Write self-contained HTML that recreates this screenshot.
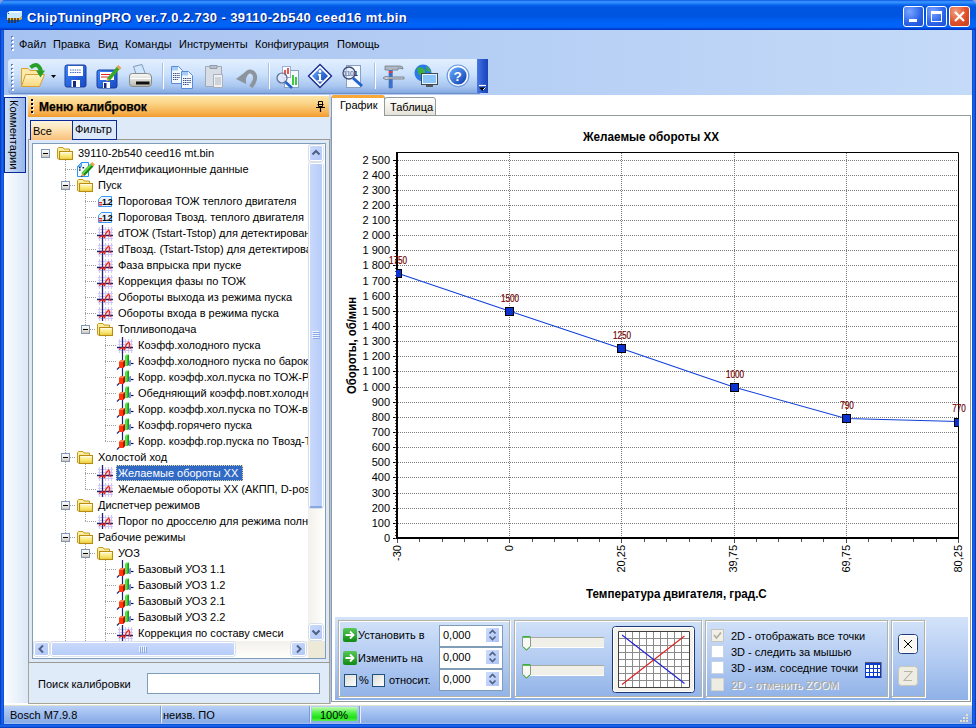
<!DOCTYPE html>
<html><head><meta charset="utf-8">
<style>
*{box-sizing:border-box;margin:0;padding:0}
html,body{width:976px;height:728px;overflow:hidden;background:#fff}
body{position:relative;font-family:"Liberation Sans",sans-serif;font-size:11px;color:#000}
.a{position:absolute}
.t{position:absolute;white-space:nowrap;line-height:13px}
svg{position:absolute;overflow:visible}
/* title bar */
#title{left:0;top:0;width:976px;height:30px;background:linear-gradient(#0a4ee0 0px,#2a80f8 1px,#3a98ff 2px,#2a88fa 3px,#0a64ec 5px,#0056e2 7px,#0055e0 16px,#0060f4 21px,#0064f8 26px,#0058f0 28px,#0038c8 29px,#0038c8 30px);border-radius:5px 5px 0 0}
#ttext{left:27px;top:10px;color:#fff;font-weight:bold;font-size:13px;letter-spacing:.4px;line-height:16px;text-shadow:1px 1px 0 #0a1e80}
.wb{position:absolute;top:6px;width:21px;height:21px;border:1px solid #fff;border-radius:3px;background:radial-gradient(circle at 30% 25%,#7aa6ff,#2a62e8 60%,#1f4fd0)}
/* borders */
#bl{left:0;top:30px;width:4px;height:698px;background:linear-gradient(90deg,#0030b8,#1a6bf0 50%,#0848d8)}
#br{left:972px;top:30px;width:4px;height:698px;background:linear-gradient(90deg,#0848d8,#1a6bf0 50%,#0030b8)}
#bb{left:0;top:724px;width:976px;height:4px;background:linear-gradient(#0848d8,#1a6bf0 50%,#0030b8)}
/* menu + toolbar band */
#band{left:4px;top:30px;width:968px;height:65px;background:linear-gradient(90deg,#a6c2f0,#c4daf8)}
.menu{top:38px}
#tb{left:8px;top:59px;width:472px;height:34px;border-radius:4px 0 0 4px;background:linear-gradient(#e3efff,#cbe1fc 45%,#a9c6f0 80%,#84a9e2);box-shadow:0 1px 0 #6f8fc4}
#chev{left:477px;top:59px;width:11px;height:34px;background:linear-gradient(90deg,#4a78e0,#2a58d0 50%,#1a44b8)}
.grip{position:absolute;width:2px;height:2px;background:#5d7fb8;box-shadow:1px 1px 0 #fff}
.sep{position:absolute;width:1px;background:#6a8cc6;box-shadow:1px 0 0 #fff}
/* left area */
#lside{left:4px;top:95px;width:24px;height:608px;background:linear-gradient(90deg,#fbfdff,#dce8f7)}
#ctab{left:4px;top:97px;width:22px;height:76px;border:1px solid #0a2a9a;background:linear-gradient(90deg,#d0e2f9,#98b6e8)}
#lpanel{left:28px;top:139px;width:302px;height:565px;background:#e0ebf9;border:1px solid #a8a698;border-top:none}
#lpbg{left:28px;top:117px;width:302px;height:22px;background:#dfeaf8}
#lhead{left:28px;top:96px;width:301px;height:21px;background:linear-gradient(#fde6a8,#fbd487 35%,#f7b04e 80%,#f19a2a)}
#tabAll{left:30px;top:120px;width:43px;height:20px;border:1px solid #0a2a9a;border-bottom:none;background:linear-gradient(#fff4e0,#fde5b8 40%,#f9c07a)}
#tabFlt{left:72px;top:120px;width:45px;height:20px;border:1px solid #0a2a9a;background:#dde9f8}
#page{left:28px;top:139px;width:302px;height:524px;border:1px solid #9c9a8e;background:#dde9f8}
#tree{left:32px;top:143px;width:294px;height:516px;border:1px solid #7f9db9;background:#fff;overflow:hidden}
#search{left:147px;top:673px;width:173px;height:21px;border:1px solid #7f9db9;background:#fff}
/* status */
#status{left:4px;top:705px;width:968px;height:19px;background:linear-gradient(#b8d0f6,#a0bef0 45%,#88ace6 90%,#a8c2ee);border-top:1px solid #e4e0d0}
/* right area */
#rpanel{left:331px;top:115px;width:640px;height:587px;border:1px solid #919b9c;border-top:1px solid #919b9c;background:#fff}
#tabG{left:331px;top:95px;width:54px;height:21px;border:1px solid #919b9c;border-bottom:none;border-top:3px solid #f8a838;border-radius:3px 3px 0 0;background:#fff}
#tabT{left:384px;top:97px;width:52px;height:19px;border:1px solid #919b9c;border-radius:3px 3px 0 0;background:linear-gradient(#fefefd,#f1efe6 60%,#e4e2d8)}
#bpanel{left:335px;top:617px;width:634px;height:84px;background:linear-gradient(#d3e3f9,#b4ccf2 50%,#8fb1e7);border-right:1px solid #fff;border-bottom:1px solid #fff}
.grp{position:absolute;top:620px;height:77px;border:1px solid #b6b3a4;box-shadow:inset 1px 1px 0 #fff,1px 1px 0 #fff}
</style></head><body>
<svg width="0" height="0" style="position:absolute;left:0;top:0">
<defs>
<linearGradient id="gMinus" x1="0" y1="0" x2="0" y2="1"><stop offset="0" stop-color="#fff"/><stop offset=".6" stop-color="#e6e4dc"/><stop offset="1" stop-color="#c8c2ac"/></linearGradient>
<linearGradient id="gFold" x1="0" y1="0" x2="0" y2="1"><stop offset="0" stop-color="#fffad0"/><stop offset=".55" stop-color="#f8e878"/><stop offset="1" stop-color="#eccc40"/></linearGradient>
<symbol id="minus" viewBox="0 0 9 9"><rect x=".5" y=".5" width="8" height="8" fill="url(#gMinus)" stroke="#8096b8"/><path d="M2 4.5H7" stroke="#000"/></symbol>
<symbol id="folder" viewBox="0 0 16 16"><path d="M0.5 12.5V2.5L1.5 1.5H6L7 3H12.5V5.5" fill="#faeea0" stroke="#c49a18"/><path d="M0.5 12.5L2.5 13.5" stroke="#c49a18"/><rect x="2.5" y="5.5" width="13" height="8" fill="url(#gFold)" stroke="#b88c10" stroke-width="1.1"/><path d="M3.5 6.6H14.5" stroke="#fffce8" stroke-width="1"/></symbol>
<symbol id="icE" viewBox="0 0 16 16" overflow="visible"><path d="M0.5 5.5L4.5 1.5H11.5V15.5H0.5Z" fill="#f4faff" stroke="#2a94f4"/><path d="M0.5 5.5L4.5 1.5V5.5Z" fill="#8cc0f4" stroke="#2a94f4" stroke-width=".8"/><rect x="2" y="6" width="1.6" height="1.4" fill="#102040"/><rect x="2" y="8.3" width="1.6" height="1.4" fill="#102040"/><rect x="5.5" y="6" width="1.6" height="1.4" fill="#102040"/><path d="M6 13.5L15 4" stroke="#188a10" stroke-width="4"/><path d="M5.6 12.6L14.3 3.4" stroke="#6ad84a" stroke-width="2"/><path d="M14.3 1.8L17 4.5" stroke="#f0a050" stroke-width="2.6"/><path d="M4 16L5 12.5L7.6 14.6Z" fill="#f0a858"/><path d="M4 16L4.6 14.4L5.8 15.3Z" fill="#000"/></symbol>
<symbol id="icN" viewBox="0 0 16 16"><path d="M1.5 6.5L4.5 3.5H14.5V13.5H1.5Z" fill="#eaf4ff" stroke="#3a98f8"/><rect x="2" y="9" width="3" height="1.3" fill="#f01818"/><rect x="2" y="11.2" width="3" height="1.3" fill="#f01818"/><text x="5" y="12.4" font-family="Liberation Sans" font-weight="bold" font-size="8.6" fill="#000" letter-spacing="-.7">1.2</text></symbol>
<symbol id="icC" viewBox="0 0 16 16"><g stroke="#cfc8f8" stroke-width="1.1"><path d="M2.5 2V16M8.5 2V16M11.5 2V16M14.5 2V16M1 4.5H16M1 7.5H16M1 13.5H16"/></g><path d="M5.5 0V17M0 10.5H16" stroke="#1e2070" stroke-width="1.3"/><path d="M2 12.5L5.5 10.5L7.5 12.5L8.6 9.4L9.4 7.4L11.6 5.2L12.6 6.4L12.6 10.4L13.6 11.8" fill="none" stroke="#f02818" stroke-width="1.3"/></symbol>
<symbol id="icB" viewBox="0 0 16 16" overflow="visible"><path d="M5.5 -1V8" stroke="#1e2070" stroke-width="1.2"/><path d="M14 10.5H16.5" stroke="#101040" stroke-width="1.2"/><path d="M0 16.5L2.5 14" stroke="#1e3070" stroke-width="1.2"/><path d="M2 9L4 7H8V13L6 15H2Z" fill="#ff3a08"/><path d="M6 9L8 7V13L6 15Z" fill="#c00808"/><path d="M2 9L4 7H8L6 9Z" fill="#ff8050"/><path d="M8 3L9.5 1.5H12V12L10.5 13H8Z" fill="#58e048"/><path d="M10.5 3L12 1.5V12L10.5 13Z" fill="#10a010"/><path d="M12 8L13 7H14V12.5L13 13H12Z" fill="#8a88f0"/></symbol>
</defs></svg>
<div class="a cornerbg" style="left:0;top:0;width:976px;height:8px;background:#8c9ed8"></div>
<div id="title" class="a"></div>
<svg style="left:6px;top:10px" width="17" height="14"><path d="M1 3L4 1H16V6L14 8H1Z" fill="#c8e8ff"/><path d="M4 1H16L14 3H1Z" fill="#e8f8ff"/><path d="M1 8H14L16 6V9L14 10H1Z" fill="#f0b830"/><path d="M3 8V13M6 8V13M9 8V13M12 8V12" stroke="#3a2a10" stroke-width="1.4"/><path d="M2 4L3 3" stroke="#304080"/></svg>
<div id="ttext" class="t">ChipTuningPRO ver.7.0.2.730 - 39110-2b540 ceed16 mt.bin</div>
<div class="wb" style="left:903px"><div class="a" style="left:5px;top:12px;width:8px;height:3px;background:#fff"></div></div>
<div class="wb" style="left:926px"><div class="a" style="left:4px;top:4px;width:11px;height:11px;border:1px solid #fff;border-top:3px solid #fff"></div></div>
<div class="wb" style="left:949px;background:radial-gradient(circle at 30% 25%,#f0a080,#e0502a 55%,#c8401c)"><svg style="left:0;top:0" width="19" height="19"><path d="M5 5L14 14M14 5L5 14" stroke="#fff" stroke-width="2.2"/></svg></div>
<div id="bl" class="a"></div><div id="br" class="a"></div><div id="bb" class="a"></div>
<div id="band" class="a"></div>
<div class="t menu" style="left:19px">Файл</div>
<div class="t menu" style="left:53px">Правка</div>
<div class="t menu" style="left:98px">Вид</div>
<div class="t menu" style="left:125px">Команды</div>
<div class="t menu" style="left:179px">Инструменты</div>
<div class="t menu" style="left:255px">Конфигурация</div>
<div class="t menu" style="left:337px">Помощь</div>
<div id="tb" class="a"></div>
<div id="chev" class="a"></div>
<div id="lside" class="a"></div>
<div id="ctab" class="a"></div>
<div class="t" style="left:8px;top:172px;transform:rotate(90deg);transform-origin:0 0;left:20px;top:100px">Комментарии</div>
<div id="lpbg" class="a"></div><div id="lpanel" class="a"></div>
<div id="lhead" class="a"></div>
<div class="t" style="left:39px;top:100px;font-weight:bold;font-size:12px;line-height:14px;-webkit-text-stroke:.25px #000">Меню калибровок</div>
<svg style="left:31px;top:99px" width="4" height="16"><g fill="#fff"><rect x="1" y="1" width="2" height="2"/><rect x="1" y="5" width="2" height="2"/><rect x="1" y="9" width="2" height="2"/><rect x="1" y="13" width="2" height="2"/></g><g fill="#000"><rect x="0" y="0" width="2" height="2"/><rect x="0" y="4" width="2" height="2"/><rect x="0" y="8" width="2" height="2"/><rect x="0" y="12" width="2" height="2"/></g></svg>
<svg style="left:315px;top:100px" width="10" height="12"><path d="M3.5 1.5H7.5V6.5H3.5Z M2.5 4.5H8.5" fill="none" stroke="#000"/><path d="M1 7.5H10M5.5 7.5V12" stroke="#000" stroke-width="1.2"/></svg>
<div id="page" class="a"></div>
<div id="tabAll" class="a"></div>
<div id="tabFlt" class="a"></div>
<div class="t" style="left:33px;top:125px">Все</div>
<div class="t" style="left:75px;top:123px">Фильтр</div>
<div id="tree" class="a"></div>
<div class="a" style="left:33px;top:144px;width:292px;height:514px;overflow:hidden"><div class="a" style="left:-33px;top:-144px;width:976px;height:728px"><svg style="left:0;top:0" width="976" height="728"><g stroke="#a0a0a0" stroke-dasharray="1 1" fill="none"><path d="M65.5 160V700"/><path d="M85.5 192V329"/><path d="M105.5 336V441"/><path d="M85.5 464V489"/><path d="M85.5 512V521"/><path d="M85.5 544V700"/><path d="M105.5 560V700"/><path d="M65 169.5H76"/><path d="M70 185.5H76"/><path d="M85 201.5H96"/><path d="M85 217.5H96"/><path d="M85 233.5H96"/><path d="M85 249.5H96"/><path d="M85 265.5H96"/><path d="M85 281.5H96"/><path d="M85 297.5H96"/><path d="M85 313.5H96"/><path d="M90 329.5H96"/><path d="M105 345.5H116"/><path d="M105 361.5H116"/><path d="M105 377.5H116"/><path d="M105 393.5H116"/><path d="M105 409.5H116"/><path d="M105 425.5H116"/><path d="M105 441.5H116"/><path d="M70 457.5H76"/><path d="M85 473.5H96"/><path d="M85 489.5H96"/><path d="M70 505.5H76"/><path d="M85 521.5H96"/><path d="M70 537.5H76"/><path d="M90 553.5H96"/><path d="M105 569.5H116"/><path d="M105 585.5H116"/><path d="M105 601.5H116"/><path d="M105 617.5H116"/><path d="M105 633.5H116"/></g></svg><svg style="left:41px;top:149px" width="9" height="9"><use href="#minus"/></svg><svg style="left:57px;top:146px" width="16" height="16"><use href="#folder"/></svg><div class="t" style="left:78px;top:147px">39110-2b540 ceed16 mt.bin</div><svg style="left:77px;top:161px" width="16" height="16"><use href="#icE"/></svg><div class="t" style="left:98px;top:163px">Идентификационные данные</div><svg style="left:61px;top:181px" width="9" height="9"><use href="#minus"/></svg><svg style="left:77px;top:178px" width="16" height="16"><use href="#folder"/></svg><div class="t" style="left:98px;top:179px">Пуск</div><svg style="left:97px;top:193px" width="16" height="16"><use href="#icN"/></svg><div class="t" style="left:118px;top:195px">Пороговая ТОЖ теплого двигателя</div><svg style="left:97px;top:209px" width="16" height="16"><use href="#icN"/></svg><div class="t" style="left:118px;top:211px">Пороговая Твозд. теплого двигателя</div><svg style="left:97px;top:225px" width="16" height="16"><use href="#icC"/></svg><div class="t" style="left:118px;top:227px">dТОЖ (Tstart-Tstop) для детектирования</div><svg style="left:97px;top:241px" width="16" height="16"><use href="#icC"/></svg><div class="t" style="left:118px;top:243px">dТвозд. (Tstart-Tstop) для детектирования</div><svg style="left:97px;top:257px" width="16" height="16"><use href="#icC"/></svg><div class="t" style="left:118px;top:259px">Фаза впрыска при пуске</div><svg style="left:97px;top:273px" width="16" height="16"><use href="#icC"/></svg><div class="t" style="left:118px;top:275px">Коррекция фазы по ТОЖ</div><svg style="left:97px;top:289px" width="16" height="16"><use href="#icC"/></svg><div class="t" style="left:118px;top:291px">Обороты выхода из режима пуска</div><svg style="left:97px;top:305px" width="16" height="16"><use href="#icC"/></svg><div class="t" style="left:118px;top:307px">Обороты входа в режима пуска</div><svg style="left:81px;top:325px" width="9" height="9"><use href="#minus"/></svg><svg style="left:97px;top:322px" width="16" height="16"><use href="#folder"/></svg><div class="t" style="left:118px;top:323px">Топливоподача</div><svg style="left:117px;top:337px" width="16" height="16"><use href="#icC"/></svg><div class="t" style="left:138px;top:339px">Коэфф.холодного пуска</div><svg style="left:117px;top:353px" width="16" height="16"><use href="#icB"/></svg><div class="t" style="left:138px;top:355px">Коэфф.холодного пуска по барокоррекции</div><svg style="left:117px;top:369px" width="16" height="16"><use href="#icB"/></svg><div class="t" style="left:138px;top:371px">Корр. коэфф.хол.пуска по ТОЖ-Pамб</div><svg style="left:117px;top:385px" width="16" height="16"><use href="#icB"/></svg><div class="t" style="left:138px;top:387px">Обедняющий коэфф.повт.холодного пуска</div><svg style="left:117px;top:401px" width="16" height="16"><use href="#icB"/></svg><div class="t" style="left:138px;top:403px">Корр. коэфф.хол.пуска по ТОЖ-вр</div><svg style="left:117px;top:417px" width="16" height="16"><use href="#icB"/></svg><div class="t" style="left:138px;top:419px">Коэфф.горячего пуска</div><svg style="left:117px;top:433px" width="16" height="16"><use href="#icB"/></svg><div class="t" style="left:138px;top:435px">Корр. коэфф.гор.пуска по Твозд-ТОЖ</div><svg style="left:61px;top:453px" width="9" height="9"><use href="#minus"/></svg><svg style="left:77px;top:450px" width="16" height="16"><use href="#folder"/></svg><div class="t" style="left:98px;top:451px">Холостой ход</div><svg style="left:97px;top:465px" width="16" height="16"><use href="#icC"/></svg><div class="a" style="left:116px;top:465px;width:127px;height:16px;background:#316ac5;outline:1px dotted #e8d890;outline-offset:-1px"></div><div class="t" style="left:118px;top:467px;color:#fff">Желаемые обороты XX</div><svg style="left:97px;top:481px" width="16" height="16"><use href="#icC"/></svg><div class="t" style="left:118px;top:483px">Желаемые обороты XX (АКПП, D-position)</div><svg style="left:61px;top:501px" width="9" height="9"><use href="#minus"/></svg><svg style="left:77px;top:498px" width="16" height="16"><use href="#folder"/></svg><div class="t" style="left:98px;top:499px">Диспетчер режимов</div><svg style="left:97px;top:513px" width="16" height="16"><use href="#icC"/></svg><div class="t" style="left:118px;top:515px">Порог по дросселю для режима полной нагрузки</div><svg style="left:61px;top:533px" width="9" height="9"><use href="#minus"/></svg><svg style="left:77px;top:530px" width="16" height="16"><use href="#folder"/></svg><div class="t" style="left:98px;top:531px">Рабочие режимы</div><svg style="left:81px;top:549px" width="9" height="9"><use href="#minus"/></svg><svg style="left:97px;top:546px" width="16" height="16"><use href="#folder"/></svg><div class="t" style="left:118px;top:547px">УОЗ</div><svg style="left:117px;top:561px" width="16" height="16"><use href="#icB"/></svg><div class="t" style="left:138px;top:563px">Базовый УОЗ 1.1</div><svg style="left:117px;top:577px" width="16" height="16"><use href="#icB"/></svg><div class="t" style="left:138px;top:579px">Базовый УОЗ 1.2</div><svg style="left:117px;top:593px" width="16" height="16"><use href="#icB"/></svg><div class="t" style="left:138px;top:595px">Базовый УОЗ 2.1</div><svg style="left:117px;top:609px" width="16" height="16"><use href="#icB"/></svg><div class="t" style="left:138px;top:611px">Базовый УОЗ 2.2</div><svg style="left:117px;top:625px" width="16" height="16"><use href="#icC"/></svg><div class="t" style="left:138px;top:627px">Коррекция по составу смеси</div></div></div>
<div class="t" style="left:38px;top:678px">Поиск калибровки</div>
<div id="search" class="a"></div>
<div id="status" class="a"></div>
<div class="t" style="left:10px;top:709px">Bosch M7.9.8</div>
<div class="t" style="left:163px;top:709px">неизв. ПО</div>
<div class="a" style="left:312px;top:707px;width:45px;height:14px;background:linear-gradient(#c0fab0,#48f040 45%,#20e018 75%,#58f050)"></div>
<div class="t" style="left:320px;top:709px">100%</div>
<div class="a" style="left:330px;top:117px;width:1px;height:587px;background:#aac2ee"></div>
<div class="a" style="left:329px;top:95px;width:2px;height:22px;background:#c8dcf4"></div>
<div id="rpanel" class="a"></div>
<div id="tabT" class="a"></div>
<div id="tabG" class="a"></div>
<div class="t" style="left:340px;top:99px">График</div>
<div class="t" style="left:390px;top:101px">Таблица</div>
<div id="bpanel" class="a"></div>
<div class="grp" style="left:338px;width:172px"></div>
<div class="grp" style="left:514px;width:188px"></div>
<div class="grp" style="left:705px;width:183px"></div>
<div class="grp" style="left:891px;width:34px"></div>
<svg style="left:0;top:0" width="976" height="100">
<defs>
<linearGradient id="tF" x1="0" y1="0" x2="0" y2="1"><stop offset="0" stop-color="#fff4c0"/><stop offset="1" stop-color="#f8d880"/></linearGradient>
<linearGradient id="tD" x1="0" y1="0" x2="1" y2="1"><stop offset="0" stop-color="#3a88ff"/><stop offset="1" stop-color="#1848c0"/></linearGradient>
<linearGradient id="tP" x1="0" y1="0" x2="0" y2="1"><stop offset="0" stop-color="#fafafa"/><stop offset="1" stop-color="#b8b8b0"/></linearGradient>
<linearGradient id="tH" x1="0" y1="0" x2="1" y2="1"><stop offset="0" stop-color="#6ab0ff"/><stop offset="1" stop-color="#0a3ab0"/></linearGradient>
</defs>
<!-- grip -->
<g fill="#6080b8"><rect x="11" y="64" width="2" height="2"/><rect x="11" y="68" width="2" height="2"/><rect x="11" y="72" width="2" height="2"/><rect x="11" y="76" width="2" height="2"/><rect x="11" y="80" width="2" height="2"/><rect x="11" y="84" width="2" height="2"/><rect x="11" y="88" width="2" height="2"/></g>
<g fill="#fff"><rect x="12" y="65" width="2" height="2"/><rect x="12" y="69" width="2" height="2"/><rect x="12" y="73" width="2" height="2"/><rect x="12" y="77" width="2" height="2"/><rect x="12" y="81" width="2" height="2"/><rect x="12" y="85" width="2" height="2"/><rect x="12" y="89" width="2" height="2"/></g>
<g fill="#6080b8"><rect x="11" y="36" width="2" height="2"/><rect x="11" y="40" width="2" height="2"/><rect x="11" y="44" width="2" height="2"/><rect x="11" y="48" width="2" height="2"/></g>
<g fill="#fff"><rect x="12" y="37" width="2" height="2"/><rect x="12" y="41" width="2" height="2"/><rect x="12" y="45" width="2" height="2"/><rect x="12" y="49" width="2" height="2"/></g>
<!-- open folder -->
<path d="M21.5 68.5H28L30 70.5H38.5V86.5H21.5Z" fill="#fde9a8" stroke="#d8a030"/>
<path d="M21.5 86.5L25.5 74.5H44.5L39.5 86.5Z" fill="url(#tF)" stroke="#d8a030"/>
<path d="M30.5 67.5Q38 61 41 71" fill="none" stroke="#28a028" stroke-width="4"/>
<path d="M36 70.5H45L40.5 77.5Z" fill="#28a028"/>
<path d="M51 75H56L53.5 78Z" fill="#000"/>
<!-- save -->
<rect x="65" y="65" width="21" height="22" rx="2" fill="url(#tD)" stroke="#1a3a9a"/>
<rect x="68" y="66" width="15" height="10" fill="#fff"/>
<path d="M70 70H81M70 72.5H81" stroke="#4070c8" stroke-dasharray="1.5 .8"/>
<rect x="71.5" y="80" width="8.5" height="7" fill="#fff"/><rect x="73" y="81" width="3" height="6" fill="#1a2a7a"/>
<!-- save as -->
<rect x="97" y="70" width="20" height="18" rx="2" fill="url(#tD)" stroke="#1a3a9a"/>
<rect x="100" y="72" width="14" height="8" fill="#fff"/>
<path d="M101 74.5H110M101 77H110" stroke="#e02020"/>
<rect x="103" y="82" width="7" height="6" fill="#fff"/><rect x="104" y="83" width="2.5" height="5" fill="#1a2a7a"/>
<path d="M108 80L119 67" stroke="#38a828" stroke-width="3.5"/><path d="M117.5 66L120.5 69" stroke="#f0a050" stroke-width="2.5"/><path d="M106 81.5L107.5 78L109.5 80Z" fill="#e8a060"/>
<!-- printer -->
<path d="M133.5 66.5L142 64.5L145.5 74.5L137 76.5Z" fill="#cfe6ff" stroke="#7890b0" stroke-width=".9"/>
<path d="M129.5 76Q129.5 73.5 132.5 73.5H147.5Q151.5 73.5 151.5 77V83.5Q151.5 86.5 148 86.5H133Q129.5 86.5 129.5 83.5Z" fill="url(#tP)" stroke="#8a8a84"/>
<path d="M130 78.5H151" stroke="#fff" stroke-width="1"/>
<path d="M136 81.5H149.5V84.5H136Z" fill="#101010"/>
<!-- separators -->
<path d="M162.5 63V89M268.5 63V89M374.5 63V89" stroke="#a8c0e8"/>
<path d="M163.5 63V89M269.5 63V89M375.5 63V89" stroke="#fffef8"/>
<!-- copy -->
<path d="M171.5 66.5H178.5L182.5 70.5V83.5H171.5Z" fill="#f4f9ff" stroke="#5a8ad8"/>
<path d="M172 67H178V70.5H172Z" fill="#a8ccf8"/>
<path d="M181.5 71.5H188.5L192.5 75.5V88.5H181.5Z" fill="#f4f9ff" stroke="#5a8ad8"/>
<path d="M182 72H188V75.5H182Z" fill="#a8ccf8"/>
<path d="M173 73.5H180M173 75.5H180M173 77.5H180M173 79.5H178M183 78.5H191M183 80.5H191M183 82.5H191M183 84.5H189" stroke="#203a70" stroke-width=".9" stroke-dasharray="1.2 .6"/>
<!-- paste disabled -->
<path d="M205.5 66.5H221.5V86.5H205.5Z" fill="#d8dce4" stroke="#a0a8b4"/>
<path d="M210 65.5H217V68.5H210Z" fill="#b8c0cc" stroke="#909aa8"/>
<path d="M213.5 74.5H222.5V87.5H213.5Z" fill="#eef0f4" stroke="#a8b0bc"/>
<path d="M215 78H221M215 80H221M215 82H221M215 84H221" stroke="#a0a8b4" stroke-width=".8"/>
<!-- undo disabled -->
<path d="M244 78Q247 70 252 72Q257 75 254 82L251 87" fill="none" stroke="#8c949e" stroke-width="4"/>
<path d="M236 79L246 71.5V84Z" fill="#8c949e"/>
<!-- chart magnifier -->
<rect x="284.5" y="70.5" width="14" height="17" fill="#f4f8ff" stroke="#8aa0c0"/>
<rect x="282.5" y="66.5" width="8" height="11" fill="#f8fbff" stroke="#9ab0d0"/>
<path d="M285 70V76M288 68V74" stroke="#e03020" stroke-width="1.6"/>
<path d="M293 75V85M296 77V85" stroke="#30c030" stroke-width="1.8"/>
<circle cx="282" cy="78" r="5" fill="#e8f0ff" fill-opacity=".7" stroke="#5a6a90" stroke-width="1.2"/>
<path d="M285.5 82L292 88" stroke="#2060d0" stroke-width="2.6"/>
<!-- info -->
<path d="M320 64.5L331.5 76L320 87.5L308.5 76Z" fill="#fff" stroke="#1a2a8a" stroke-width="1.4"/>
<path d="M320 68L328 76L320 84L312 76Z" fill="url(#tH)"/>
<circle cx="320" cy="71.5" r="1.4" fill="#fff"/><path d="M318 74H321V80H322.5V81.5H317.5V80H319V75.5H318Z" fill="#fff"/>
<!-- magnifier 1101 -->
<rect x="346.5" y="65.5" width="14" height="22" fill="#f4f8ff" stroke="#8aa0c0"/>
<text x="343" y="76" font-family="Liberation Sans" font-weight="bold" font-size="8" fill="#203060" letter-spacing="-.8">1101</text>
<circle cx="349" cy="73" r="6" fill="#dce8ff" fill-opacity=".5" stroke="#404a70" stroke-width="1.3"/>
<path d="M353 78L362 86" stroke="#2060d0" stroke-width="3"/>
<!-- tools -->
<path d="M385 66H400Q403 66 403 69L398 68V70H392V88H389V70H385Z" fill="#b0b8c4" stroke="#707884" stroke-width=".8"/>
<rect x="389" y="70" width="3.5" height="18" fill="#3a70d0"/><rect x="389" y="71" width="3.5" height="2" fill="#e04040"/>
<path d="M383 78Q386 75 389 77H404V79H389Q386 81 383 78" fill="#c8ccd4" stroke="#707884" stroke-width=".8"/>
<!-- globe + monitor -->
<circle cx="423" cy="73" r="8.5" fill="#2a7ae8"/><path d="M417 68Q421 66 424 69Q427 72 423 75Q419 76 418 72ZM426 66Q430 68 431 72L427 71Z" fill="#3ab040"/>
<rect x="421.5" y="73.5" width="16" height="11" fill="#e8f4ff" stroke="#404850"/><rect x="423" y="75" width="13" height="8" fill="#8ac4f8"/><rect x="426" y="85" width="7" height="2" fill="#505860"/>
<!-- help -->
<circle cx="458" cy="75.8" r="10.8" fill="#fff" stroke="#6a9ae0" stroke-width="1.2"/><circle cx="458" cy="75.8" r="8.6" fill="url(#tH)"/>
<text x="453.6" y="81" font-family="Liberation Sans" font-weight="bold" font-size="13.5" fill="#fff">?</text>
<!-- chevron -->
<path d="M479 85.5H486" stroke="#fff" stroke-width="1.2"/><path d="M479 87.5H486L482.5 91Z" fill="#000"/><path d="M483 90L485.5 87.5" stroke="#fff"/>
</svg>

<div class="a" style="left:308px;top:144px;width:17px;height:497px;background:linear-gradient(90deg,#f3f1ec,#fefefb)"></div>
<div class="a" style="left:309px;top:145px;width:14px;height:16px;border-radius:2px;border:1px solid #fff;box-shadow:0 0 0 .5px #b8c8e8;background:linear-gradient(135deg,#cbdafd,#b2c8f8)"></div>
<svg style="left:309px;top:145px" width="14" height="16"><path d="M3.5 9.5L7 6L10.5 9.5" fill="none" stroke="#4d6185" stroke-width="2"/></svg>
<div class="a" style="left:309px;top:163px;width:14px;height:345px;border-radius:2px;border:1px solid #fff;border-bottom:2px solid #88a8e0;box-shadow:0 0 0 .5px #b8c8e8;background:linear-gradient(90deg,#cad9fc,#b6ccf8)"></div>
<svg style="left:309px;top:163px" width="14" height="343"><path d="M3 168.5H10M3 170.5H10M3 172.5H10M3 174.5H10" stroke="#eef4ff"/><path d="M4 169.5H11M4 171.5H11M4 173.5H11M4 175.5H11" stroke="#8aa8e8"/></svg>
<div class="a" style="left:309px;top:624px;width:14px;height:16px;border-radius:2px;border:1px solid #fff;box-shadow:0 0 0 .5px #b8c8e8;background:linear-gradient(135deg,#cbdafd,#b2c8f8)"></div>
<svg style="left:309px;top:624px" width="14" height="16"><path d="M3.5 6.5L7 10L10.5 6.5" fill="none" stroke="#4d6185" stroke-width="2"/></svg>
<div class="a" style="left:33px;top:641px;width:275px;height:17px;background:linear-gradient(#f3f1ec,#fefefb)"></div>
<div class="a" style="left:308px;top:641px;width:17px;height:17px;background:#ece9d8"></div>
<div class="a" style="left:34px;top:642px;width:15px;height:14px;border-radius:2px;border:1px solid #fff;box-shadow:0 0 0 .5px #b8c8e8;background:linear-gradient(135deg,#cbdafd,#b2c8f8)"></div>
<svg style="left:34px;top:642px" width="15" height="14"><path d="M9 3.5L5.5 7L9 10.5" fill="none" stroke="#4d6185" stroke-width="2"/></svg>
<div class="a" style="left:51px;top:642px;width:184px;height:14px;border-radius:2px;border:1px solid #fff;box-shadow:0 0 0 .5px #b8c8e8;background:linear-gradient(#cad9fc,#b6ccf8)"></div>
<svg style="left:51px;top:642px" width="184" height="14"><path d="M88.5 4V10M90.5 4V10M92.5 4V10M94.5 4V10" stroke="#eef4ff"/><path d="M89.5 5V11M91.5 5V11M93.5 5V11M95.5 5V11" stroke="#8aa8e8"/></svg>
<div class="a" style="left:291px;top:642px;width:15px;height:14px;border-radius:2px;border:1px solid #fff;box-shadow:0 0 0 .5px #b8c8e8;background:linear-gradient(135deg,#cbdafd,#b2c8f8)"></div>
<svg style="left:291px;top:642px" width="15" height="14"><path d="M6 3.5L9.5 7L6 10.5" fill="none" stroke="#4d6185" stroke-width="2"/></svg>

<svg style="left:0;top:0" width="976" height="728"><g stroke="#7a7a7a" stroke-dasharray="1 1"><path d="M398 523.5H958"/><path d="M398 508.5H958"/><path d="M398 493.5H958"/><path d="M398 477.5H958"/><path d="M398 462.5H958"/><path d="M398 447.5H958"/><path d="M398 432.5H958"/><path d="M398 417.5H958"/><path d="M398 402.5H958"/><path d="M398 387.5H958"/><path d="M398 371.5H958"/><path d="M398 356.5H958"/><path d="M398 341.5H958"/><path d="M398 326.5H958"/><path d="M398 311.5H958"/><path d="M398 296.5H958"/><path d="M398 281.5H958"/><path d="M398 265.5H958"/><path d="M398 250.5H958"/><path d="M398 235.5H958"/><path d="M398 220.5H958"/><path d="M398 205.5H958"/><path d="M398 190.5H958"/><path d="M398 175.5H958"/><path d="M398 160.5H958"/><path d="M509.5 153V537"/><path d="M621.5 153V537"/><path d="M734.5 153V537"/><path d="M846.5 153V537"/></g><g stroke="#000"><path d="M393 538.5H397"/><path d="M393 523.5H397"/><path d="M393 508.5H397"/><path d="M393 493.5H397"/><path d="M393 477.5H397"/><path d="M393 462.5H397"/><path d="M393 447.5H397"/><path d="M393 432.5H397"/><path d="M393 417.5H397"/><path d="M393 402.5H397"/><path d="M393 387.5H397"/><path d="M393 371.5H397"/><path d="M393 356.5H397"/><path d="M393 341.5H397"/><path d="M393 326.5H397"/><path d="M393 311.5H397"/><path d="M393 296.5H397"/><path d="M393 281.5H397"/><path d="M393 265.5H397"/><path d="M393 250.5H397"/><path d="M393 235.5H397"/><path d="M393 220.5H397"/><path d="M393 205.5H397"/><path d="M393 190.5H397"/><path d="M393 175.5H397"/><path d="M393 160.5H397"/><path d="M395 538.5H396" stroke="#444"/><path d="M395 535.5H396" stroke="#444"/><path d="M395 532.5H396" stroke="#444"/><path d="M395 529.5H396" stroke="#444"/><path d="M395 526.5H396" stroke="#444"/><path d="M395 523.5H396" stroke="#444"/><path d="M395 520.5H396" stroke="#444"/><path d="M395 517.5H396" stroke="#444"/><path d="M395 514.5H396" stroke="#444"/><path d="M395 511.5H396" stroke="#444"/><path d="M395 508.5H396" stroke="#444"/><path d="M395 505.5H396" stroke="#444"/><path d="M395 502.5H396" stroke="#444"/><path d="M395 499.5H396" stroke="#444"/><path d="M395 496.5H396" stroke="#444"/><path d="M395 493.5H396" stroke="#444"/><path d="M395 490.5H396" stroke="#444"/><path d="M395 487.5H396" stroke="#444"/><path d="M395 483.5H396" stroke="#444"/><path d="M395 480.5H396" stroke="#444"/><path d="M395 477.5H396" stroke="#444"/><path d="M395 474.5H396" stroke="#444"/><path d="M395 471.5H396" stroke="#444"/><path d="M395 468.5H396" stroke="#444"/><path d="M395 465.5H396" stroke="#444"/><path d="M395 462.5H396" stroke="#444"/><path d="M395 459.5H396" stroke="#444"/><path d="M395 456.5H396" stroke="#444"/><path d="M395 453.5H396" stroke="#444"/><path d="M395 450.5H396" stroke="#444"/><path d="M395 447.5H396" stroke="#444"/><path d="M395 444.5H396" stroke="#444"/><path d="M395 441.5H396" stroke="#444"/><path d="M395 438.5H396" stroke="#444"/><path d="M395 435.5H396" stroke="#444"/><path d="M395 432.5H396" stroke="#444"/><path d="M395 429.5H396" stroke="#444"/><path d="M395 426.5H396" stroke="#444"/><path d="M395 423.5H396" stroke="#444"/><path d="M395 420.5H396" stroke="#444"/><path d="M395 417.5H396" stroke="#444"/><path d="M395 414.5H396" stroke="#444"/><path d="M395 411.5H396" stroke="#444"/><path d="M395 408.5H396" stroke="#444"/><path d="M395 405.5H396" stroke="#444"/><path d="M395 402.5H396" stroke="#444"/><path d="M395 399.5H396" stroke="#444"/><path d="M395 396.5H396" stroke="#444"/><path d="M395 393.5H396" stroke="#444"/><path d="M395 390.5H396" stroke="#444"/><path d="M395 387.5H396" stroke="#444"/><path d="M395 384.5H396" stroke="#444"/><path d="M395 381.5H396" stroke="#444"/><path d="M395 377.5H396" stroke="#444"/><path d="M395 374.5H396" stroke="#444"/><path d="M395 371.5H396" stroke="#444"/><path d="M395 368.5H396" stroke="#444"/><path d="M395 365.5H396" stroke="#444"/><path d="M395 362.5H396" stroke="#444"/><path d="M395 359.5H396" stroke="#444"/><path d="M395 356.5H396" stroke="#444"/><path d="M395 353.5H396" stroke="#444"/><path d="M395 350.5H396" stroke="#444"/><path d="M395 347.5H396" stroke="#444"/><path d="M395 344.5H396" stroke="#444"/><path d="M395 341.5H396" stroke="#444"/><path d="M395 338.5H396" stroke="#444"/><path d="M395 335.5H396" stroke="#444"/><path d="M395 332.5H396" stroke="#444"/><path d="M395 329.5H396" stroke="#444"/><path d="M395 326.5H396" stroke="#444"/><path d="M395 323.5H396" stroke="#444"/><path d="M395 320.5H396" stroke="#444"/><path d="M395 317.5H396" stroke="#444"/><path d="M395 314.5H396" stroke="#444"/><path d="M395 311.5H396" stroke="#444"/><path d="M395 308.5H396" stroke="#444"/><path d="M395 305.5H396" stroke="#444"/><path d="M395 302.5H396" stroke="#444"/><path d="M395 299.5H396" stroke="#444"/><path d="M395 296.5H396" stroke="#444"/><path d="M395 293.5H396" stroke="#444"/><path d="M395 290.5H396" stroke="#444"/><path d="M395 287.5H396" stroke="#444"/><path d="M395 284.5H396" stroke="#444"/><path d="M395 281.5H396" stroke="#444"/><path d="M395 278.5H396" stroke="#444"/><path d="M395 275.5H396" stroke="#444"/><path d="M395 271.5H396" stroke="#444"/><path d="M395 268.5H396" stroke="#444"/><path d="M395 265.5H396" stroke="#444"/><path d="M395 262.5H396" stroke="#444"/><path d="M395 259.5H396" stroke="#444"/><path d="M395 256.5H396" stroke="#444"/><path d="M395 253.5H396" stroke="#444"/><path d="M395 250.5H396" stroke="#444"/><path d="M395 247.5H396" stroke="#444"/><path d="M395 244.5H396" stroke="#444"/><path d="M395 241.5H396" stroke="#444"/><path d="M395 238.5H396" stroke="#444"/><path d="M395 235.5H396" stroke="#444"/><path d="M395 232.5H396" stroke="#444"/><path d="M395 229.5H396" stroke="#444"/><path d="M395 226.5H396" stroke="#444"/><path d="M395 223.5H396" stroke="#444"/><path d="M395 220.5H396" stroke="#444"/><path d="M395 217.5H396" stroke="#444"/><path d="M395 214.5H396" stroke="#444"/><path d="M395 211.5H396" stroke="#444"/><path d="M395 208.5H396" stroke="#444"/><path d="M395 205.5H396" stroke="#444"/><path d="M395 202.5H396" stroke="#444"/><path d="M395 199.5H396" stroke="#444"/><path d="M395 196.5H396" stroke="#444"/><path d="M395 193.5H396" stroke="#444"/><path d="M395 190.5H396" stroke="#444"/><path d="M395 187.5H396" stroke="#444"/><path d="M395 184.5H396" stroke="#444"/><path d="M395 181.5H396" stroke="#444"/><path d="M395 178.5H396" stroke="#444"/><path d="M395 175.5H396" stroke="#444"/><path d="M395 172.5H396" stroke="#444"/><path d="M395 169.5H396" stroke="#444"/><path d="M395 166.5H396" stroke="#444"/><path d="M395 163.5H396" stroke="#444"/><path d="M397.5 539V543" stroke="#505050"/><path d="M419.5 539V542" stroke="#505050"/><path d="M442.5 539V542" stroke="#505050"/><path d="M464.5 539V542" stroke="#505050"/><path d="M487.5 539V542" stroke="#505050"/><path d="M509.5 539V543" stroke="#505050"/><path d="M532.5 539V542" stroke="#505050"/><path d="M554.5 539V542" stroke="#505050"/><path d="M577.5 539V542" stroke="#505050"/><path d="M599.5 539V542" stroke="#505050"/><path d="M621.5 539V543" stroke="#505050"/><path d="M644.5 539V542" stroke="#505050"/><path d="M666.5 539V542" stroke="#505050"/><path d="M689.5 539V542" stroke="#505050"/><path d="M711.5 539V542" stroke="#505050"/><path d="M734.5 539V543" stroke="#505050"/><path d="M756.5 539V542" stroke="#505050"/><path d="M778.5 539V542" stroke="#505050"/><path d="M801.5 539V542" stroke="#505050"/><path d="M823.5 539V542" stroke="#505050"/><path d="M846.5 539V543" stroke="#505050"/><path d="M868.5 539V542" stroke="#505050"/><path d="M891.5 539V542" stroke="#505050"/><path d="M913.5 539V542" stroke="#505050"/><path d="M936.5 539V542" stroke="#505050"/><path d="M958.5 539V543" stroke="#505050"/></g><path d="M397 152.5H958.5V538" fill="none" stroke="#000"/><path d="M397 152V538H959" fill="none" stroke="#000" stroke-width="2"/><clipPath id="plotclip"><rect x="396" y="150" width="563" height="390"/></clipPath><g clip-path="url(#plotclip)"><path d="M397.0 273.0 L509.2 311.0 L621.4 348.5 L733.6 387.0 L846.0 418.5 L958.0 421.5" fill="none" stroke="#1040d8" stroke-width="1.1"/><rect x="393.5" y="269.5" width="8" height="8" fill="#0a32d0" stroke="#000" stroke-width="1"/><rect x="505.5" y="307.5" width="8" height="8" fill="#0a32d0" stroke="#000" stroke-width="1"/><rect x="617.5" y="344.5" width="8" height="8" fill="#0a32d0" stroke="#000" stroke-width="1"/><rect x="730.5" y="383.5" width="8" height="8" fill="#0a32d0" stroke="#000" stroke-width="1"/><rect x="842.5" y="414.5" width="8" height="8" fill="#0a32d0" stroke="#000" stroke-width="1"/><rect x="954.5" y="418.5" width="8" height="8" fill="#0a32d0" stroke="#000" stroke-width="1"/></g></svg><div class="t" style="left:330px;width:60px;text-align:right;top:531.5px">0</div><div class="t" style="left:330px;width:60px;text-align:right;top:516.5px">100</div><div class="t" style="left:330px;width:60px;text-align:right;top:501.5px">200</div><div class="t" style="left:330px;width:60px;text-align:right;top:486.5px">300</div><div class="t" style="left:330px;width:60px;text-align:right;top:470.5px">400</div><div class="t" style="left:330px;width:60px;text-align:right;top:455.5px">500</div><div class="t" style="left:330px;width:60px;text-align:right;top:440.5px">600</div><div class="t" style="left:330px;width:60px;text-align:right;top:425.5px">700</div><div class="t" style="left:330px;width:60px;text-align:right;top:410.5px">800</div><div class="t" style="left:330px;width:60px;text-align:right;top:395.5px">900</div><div class="t" style="left:330px;width:60px;text-align:right;top:380.5px">1 000</div><div class="t" style="left:330px;width:60px;text-align:right;top:364.5px">1 100</div><div class="t" style="left:330px;width:60px;text-align:right;top:349.5px">1 200</div><div class="t" style="left:330px;width:60px;text-align:right;top:334.5px">1 300</div><div class="t" style="left:330px;width:60px;text-align:right;top:319.5px">1 400</div><div class="t" style="left:330px;width:60px;text-align:right;top:304.5px">1 500</div><div class="t" style="left:330px;width:60px;text-align:right;top:289.5px">1 600</div><div class="t" style="left:330px;width:60px;text-align:right;top:274.5px">1 700</div><div class="t" style="left:330px;width:60px;text-align:right;top:258.5px">1 800</div><div class="t" style="left:330px;width:60px;text-align:right;top:243.5px">1 900</div><div class="t" style="left:330px;width:60px;text-align:right;top:228.5px">2 000</div><div class="t" style="left:330px;width:60px;text-align:right;top:213.5px">2 100</div><div class="t" style="left:330px;width:60px;text-align:right;top:198.5px">2 200</div><div class="t" style="left:330px;width:60px;text-align:right;top:183.5px">2 300</div><div class="t" style="left:330px;width:60px;text-align:right;top:168.5px">2 400</div><div class="t" style="left:330px;width:60px;text-align:right;top:153.5px">2 500</div><div class="t" style="left:390.5px;top:545px;width:40px;text-align:right;transform-origin:0 0;transform:rotate(-90deg) translate(-40px,0)">-30</div><div class="t" style="left:502.7px;top:545px;width:40px;text-align:right;transform-origin:0 0;transform:rotate(-90deg) translate(-40px,0)">0</div><div class="t" style="left:614.9px;top:545px;width:40px;text-align:right;transform-origin:0 0;transform:rotate(-90deg) translate(-40px,0)">20,25</div><div class="t" style="left:727.1px;top:545px;width:40px;text-align:right;transform-origin:0 0;transform:rotate(-90deg) translate(-40px,0)">39,75</div><div class="t" style="left:839.5px;top:545px;width:40px;text-align:right;transform-origin:0 0;transform:rotate(-90deg) translate(-40px,0)">69,75</div><div class="t" style="left:951.5px;top:545px;width:40px;text-align:right;transform-origin:0 0;transform:rotate(-90deg) translate(-40px,0)">80,25</div><div class="t" style="left:378.0px;width:40px;text-align:center;top:253.5px;font-size:10.5px;color:#700000;-webkit-text-stroke:.2px #700000;transform:scaleX(.78)">1750</div><div class="t" style="left:490.2px;width:40px;text-align:center;top:291.5px;font-size:10.5px;color:#700000;-webkit-text-stroke:.2px #700000;transform:scaleX(.78)">1500</div><div class="t" style="left:602.4px;width:40px;text-align:center;top:329.0px;font-size:10.5px;color:#700000;-webkit-text-stroke:.2px #700000;transform:scaleX(.78)">1250</div><div class="t" style="left:714.6px;width:40px;text-align:center;top:367.5px;font-size:10.5px;color:#700000;-webkit-text-stroke:.2px #700000;transform:scaleX(.78)">1000</div><div class="t" style="left:827.0px;width:40px;text-align:center;top:399.0px;font-size:10.5px;color:#700000;-webkit-text-stroke:.2px #700000;transform:scaleX(.78)">790</div><div class="t" style="left:939.0px;width:40px;text-align:center;top:402.0px;font-size:10.5px;color:#700000;-webkit-text-stroke:.2px #700000;transform:scaleX(.78)">770</div><div class="t" style="left:583px;top:130px;font-weight:bold;font-size:13px;transform-origin:0 0;transform:scaleX(.901)">Желаемые обороты ХХ</div><div class="t" style="left:586px;top:588px;font-weight:bold;font-size:12.5px;transform-origin:0 0;transform:scaleX(.93)">Температура двигателя, град.С</div><div class="t" style="left:346px;top:394px;font-weight:bold;font-size:12.5px;transform-origin:0 0;transform:rotate(-90deg) scaleX(.906)">Обороты, об/мин</div>
<svg style="left:0;top:0" width="976" height="728">
<defs>
<linearGradient id="gG" x1="0" y1="0" x2="0" y2="1"><stop offset="0" stop-color="#58c858"/><stop offset="1" stop-color="#108a10"/></linearGradient>
<linearGradient id="gCb" x1="0" y1="0" x2="1" y2="1"><stop offset="0" stop-color="#dcdcd4"/><stop offset="1" stop-color="#fff"/></linearGradient>
<linearGradient id="gSp" x1="0" y1="0" x2="1" y2="1"><stop offset="0" stop-color="#cddcfc"/><stop offset="1" stop-color="#aec4f4"/></linearGradient>
</defs>
<!-- arrows -->
<rect x="343" y="628" width="14" height="14" rx="2" fill="url(#gG)"/>
<path d="M345.5 635H353M350 631.5L353.5 635L350 638.5" fill="none" stroke="#fff" stroke-width="1.8"/>
<rect x="343" y="651" width="14" height="14" rx="2" fill="url(#gG)"/>
<path d="M345.5 658H353M350 654.5L353.5 658L350 661.5" fill="none" stroke="#fff" stroke-width="1.8"/>
<!-- checkboxes -->
<rect x="344.5" y="674.5" width="12" height="12" fill="url(#gCb)" stroke="#1c5180"/>
<rect x="372.5" y="674.5" width="12" height="12" fill="url(#gCb)" stroke="#1c5180"/>
<!-- inputs -->
<rect x="439.5" y="625.5" width="63" height="21" fill="#fff" stroke="#7f9db9"/>
<rect x="439.5" y="647.5" width="63" height="21" fill="#fff" stroke="#7f9db9"/>
<rect x="439.5" y="669.5" width="63" height="21" fill="#fff" stroke="#7f9db9"/>
<rect x="486" y="628" width="13" height="14" fill="url(#gSp)"/>
<rect x="486" y="650" width="13" height="14" fill="url(#gSp)"/>
<rect x="486" y="672" width="13" height="14" fill="url(#gSp)"/>
<g fill="none" stroke="#4d6185" stroke-width="1.6">
<path d="M489.5 633.5L492.5 630.5L495.5 633.5M489.5 636.5L492.5 639.5L495.5 636.5"/>
<path d="M489.5 655.5L492.5 652.5L495.5 655.5M489.5 658.5L492.5 661.5L495.5 658.5"/>
<path d="M489.5 677.5L492.5 674.5L495.5 677.5M489.5 680.5L492.5 683.5L495.5 680.5"/>
</g>
<!-- sliders -->
<rect x="530" y="637" width="74" height="11" fill="#f0efe8"/><path d="M530 637.5H604" stroke="#a8a8a0"/><path d="M530 647.5H604" stroke="#fff"/>
<rect x="530" y="665" width="74" height="11" fill="#f0efe8"/><path d="M530 665.5H604" stroke="#a8a8a0"/><path d="M530 675.5H604" stroke="#fff"/>
<path d="M522.5 636.5H530.5V646.5L526.5 650.5L522.5 646.5Z" fill="#f8f8f4" stroke="#8a9a8a"/><path d="M523 637H530" stroke="#30b030" stroke-width="1.6"/><path d="M523 646.5L526.5 650L530 646.5" fill="none" stroke="#30b030"/>
<path d="M522.5 664.5H530.5V674.5L526.5 678.5L522.5 674.5Z" fill="#f8f8f4" stroke="#8a9a8a"/><path d="M523 665H530" stroke="#30b030" stroke-width="1.6"/><path d="M523 674.5L526.5 678L530 674.5" fill="none" stroke="#30b030"/>
<!-- graph button -->
<rect x="612.5" y="626.5" width="82" height="66" rx="3" fill="#f4f2ea" stroke="#1c3a78"/>
<rect x="613.5" y="627.5" width="80" height="64" rx="2" fill="none" stroke="#fff"/>
<path d="M618.5 631.5H689.5V687.5H618.5Z" fill="#fff" stroke="#404040"/>
<g stroke="#8c8c8c">
<path d="M625.5 632V687M632.5 632V687M639.5 632V687M646.5 632V687M653.5 632V687M660.5 632V687M667.5 632V687M674.5 632V687M681.5 632V687"/>
<path d="M619 638.5H689M619 645.5H689M619 652.5H689M619 659.5H689M619 666.5H689M619 673.5H689M619 680.5H689"/>
</g>
<path d="M622 684.5L684.5 636" stroke="#e02020" stroke-width="1.1"/>
<path d="M622 635L684.5 683.5" stroke="#2020d8" stroke-width="1.1"/>
<!-- checkboxes group 3 -->
<rect x="711.5" y="629.5" width="12" height="12" fill="#f0efe8" stroke="#c8c6b8"/>
<path d="M714 635L716.5 638L721 632.5" fill="none" stroke="#b0ae9c" stroke-width="1.6"/>
<rect x="711.5" y="645.5" width="12" height="12" fill="#fff" stroke="#c8d4e4"/>
<rect x="711.5" y="661.5" width="12" height="12" fill="#fff" stroke="#c8d4e4"/>
<rect x="711.5" y="678.5" width="12" height="12" fill="#eeede4" stroke="#d8d6cc"/>
<!-- grid icon -->
<rect x="865" y="662" width="16" height="16" fill="#0a3ad0"/><g fill="#fff"><rect x="866" y="665" width="3" height="3"/><rect x="866" y="669" width="3" height="3"/><rect x="866" y="673" width="3" height="3"/><rect x="870" y="665" width="3" height="3"/><rect x="870" y="669" width="3" height="3"/><rect x="870" y="673" width="3" height="3"/><rect x="874" y="665" width="3" height="3"/><rect x="874" y="669" width="3" height="3"/><rect x="874" y="673" width="3" height="3"/><rect x="878" y="665" width="2" height="3"/><rect x="878" y="669" width="2" height="3"/><rect x="878" y="673" width="2" height="3"/></g><path d="M881.5 662V678" stroke="#808080"/><path d="M865 662.5H881" stroke="#8a6a40" stroke-opacity=".6"/>
<!-- X button -->
<rect x="898.5" y="634.5" width="19" height="19" rx="3" fill="#f8f7f2" stroke="#1c3a78"/><rect x="899.5" y="635.5" width="17" height="17" rx="2" fill="none" stroke="#fff"/>
<path d="M904 640L912 648M912 640L904 648" stroke="#000" stroke-width="1"/>
<rect x="898.5" y="666.5" width="19" height="19" rx="3" fill="#eeede4" stroke="#c8c6b8"/>
<path d="M904 671.5H912L904 680.5H912" fill="none" stroke="#b8b6a8" stroke-width="1.1"/>
</svg>
<div class="t" style="left:358px;top:629px">Установить в</div>
<div class="t" style="left:358px;top:652px">Изменить на</div>
<div class="t" style="left:359px;top:674px">%</div>
<div class="t" style="left:389px;top:674px">относит.</div>
<div class="t" style="left:443px;top:629px">0,000</div>
<div class="t" style="left:443px;top:651px">0,000</div>
<div class="t" style="left:443px;top:673px">0,000</div>
<div class="t" style="left:731px;top:630px">2D - отображать все точки</div>
<div class="t" style="left:731px;top:646px">3D - следить за мышью</div>
<div class="t" style="left:731px;top:662px">3D - изм. соседние точки</div>
<div class="t" style="left:731px;top:679px;color:#aca899;text-shadow:1px 1px 0 #fff">2D - отменить ZOOM</div>
<!-- status separators -->
<div class="a" style="left:160px;top:706px;width:2px;height:17px;border-left:1px solid #7a9ad0;border-right:1px solid #e8f0fc"></div>
<div class="a" style="left:309px;top:706px;width:2px;height:17px;border-left:1px solid #7a9ad0;border-right:1px solid #e8f0fc"></div>
<div class="a" style="left:359px;top:706px;width:2px;height:17px;border-left:1px solid #7a9ad0;border-right:1px solid #e8f0fc"></div>
<svg style="left:958px;top:712px" width="12" height="12"><!-- resize grip --><g fill="#e8e2c8"><rect x="8" y="2" width="2" height="2"/><rect x="5" y="5" width="2" height="2"/><rect x="8" y="5" width="2" height="2"/><rect x="2" y="8" width="2" height="2"/><rect x="5" y="8" width="2" height="2"/><rect x="8" y="8" width="2" height="2"/></g></svg>

</body></html>
